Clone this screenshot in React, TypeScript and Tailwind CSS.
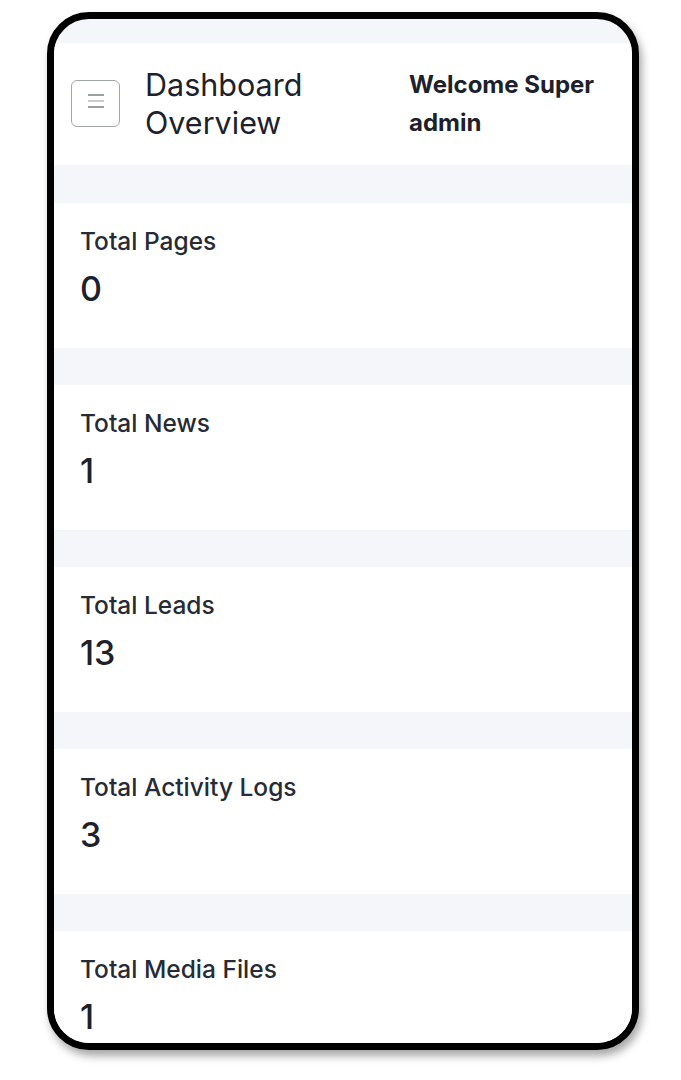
import React from "react";

const stats = [
  { label: "Total Pages", value: 0 },
  { label: "Total News", value: 1 },
  { label: "Total Leads", value: 13 },
  { label: "Total Activity Logs", value: 3 },
  { label: "Total Media Files", value: 1 },
];

const StatCard = ({ label, value }: { label: string; value: number }) => (
  <div className="bg-white h-[145px] shrink-0 pl-[26px] pt-[22px]">
    <p className="text-[24.5px] leading-[32px] font-medium text-[#262b36]">{label}</p>
    <p className="mt-[12px] text-[34px] leading-[40px] font-medium text-[#1c212b]">{value}</p>
  </div>
);

const App: React.FC = () => {
  return (
    <div className="min-h-screen bg-white" style={{ fontFamily: "Inter, 'Noto Sans', sans-serif" }}>
      <div className="pt-[12px] pl-[47px]">
        {/* phone frame */}
        <div className="w-[592px] h-[1038px] rounded-[42px] border-[7px] border-black bg-[#f5f6fa] overflow-hidden shadow-[3px_6px_8px_rgba(0,0,0,0.35)]">
          <div className="flex flex-col pt-[24px]">
            {/* header */}
            <div className="bg-white h-[122px] flex items-center pl-[17px] pr-[16px]">
              <button className="w-[49px] h-[47px] -mt-[1px] rounded-[6px] border-[1.5px] border-[#a3a7ad] flex items-center justify-center shrink-0">
                <svg width="18" height="16" viewBox="0 0 18 16" className="-mt-[6px]">
                  <line x1="1" y1="2" x2="17" y2="2" stroke="#7b8088" strokeWidth="1.6" />
                  <line x1="1" y1="8" x2="17" y2="8" stroke="#b4b8be" strokeWidth="1.6" />
                  <line x1="1" y1="14" x2="17" y2="14" stroke="#7b8088" strokeWidth="1.6" />
                </svg>
              </button>
              <h1 className="ml-[25px] w-[264px] shrink-0 text-[30.5px] leading-[38px] font-normal text-[#1c212b]">
                Dashboard Overview
              </h1>
              <p className="w-[208px] text-[24px] leading-[38px] font-bold text-[#1c212b]">
                Welcome Super admin
              </p>
            </div>

            <div className="flex flex-col gap-[37px] pt-[38px]">
              {stats.map((s) => (
                <StatCard key={s.label} label={s.label} value={s.value} />
              ))}
            </div>
          </div>
        </div>
      </div>
    </div>
  );
};

export default App;
